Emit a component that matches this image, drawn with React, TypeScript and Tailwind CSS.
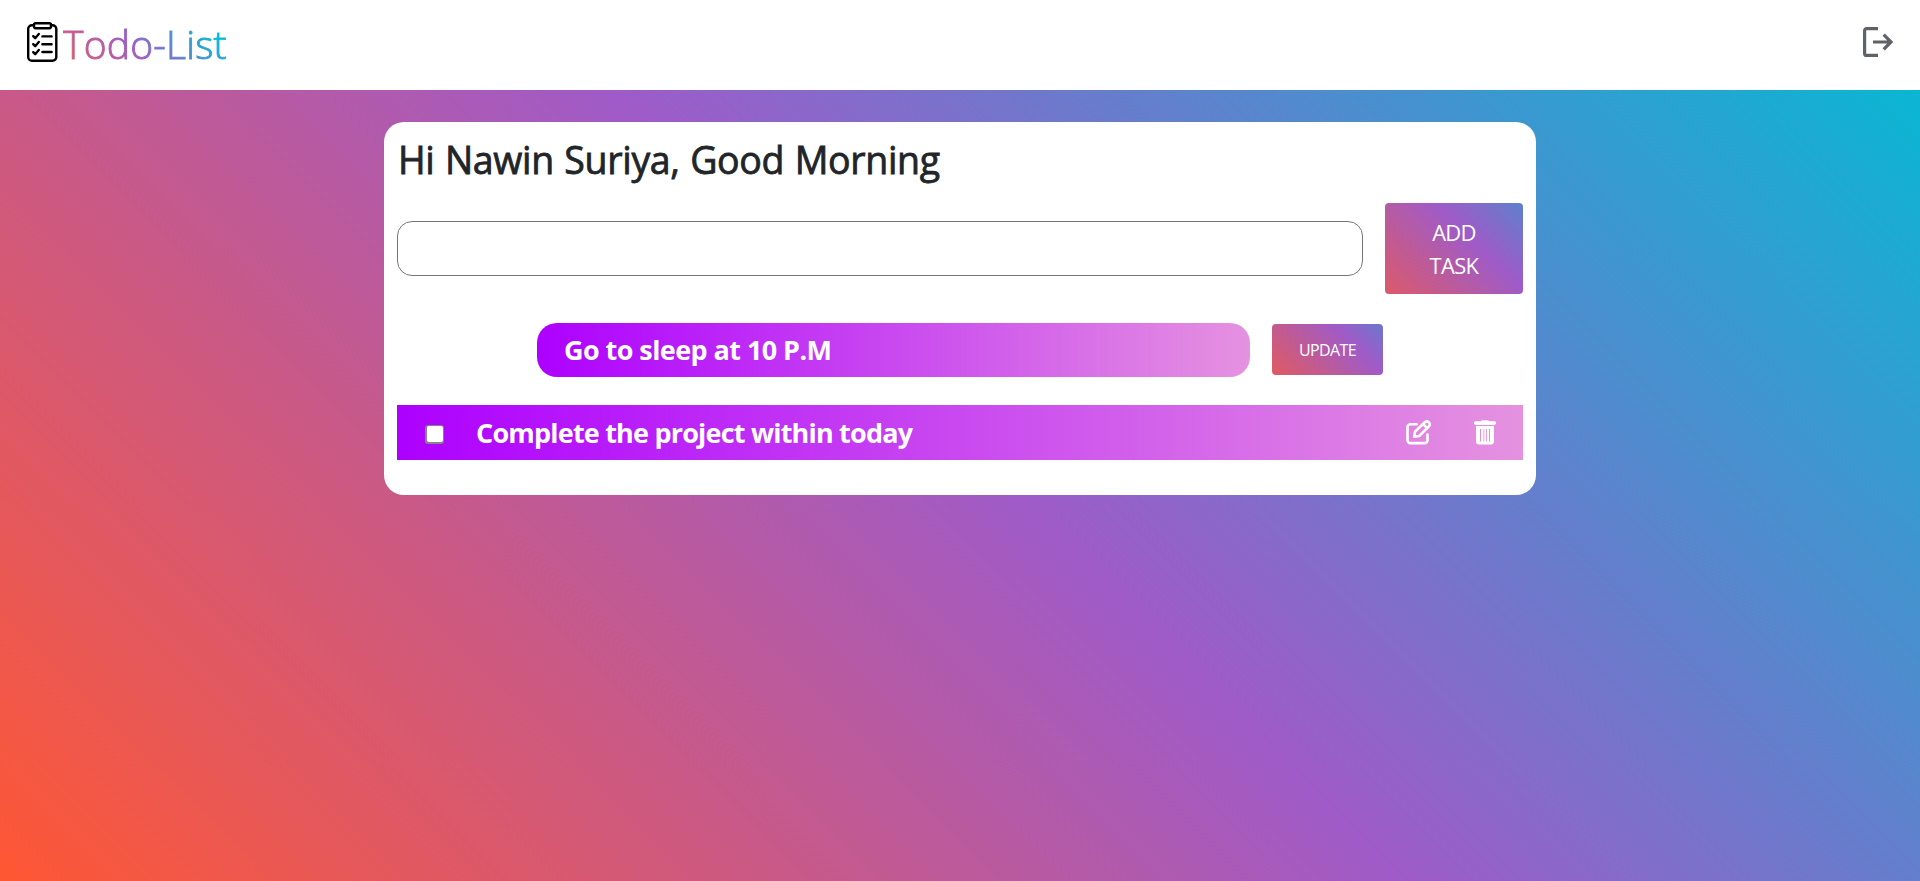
function ClipboardIcon() {
  return (
    <svg className="h-10 w-[31px] shrink-0" viewBox="0 0 31 40" fill="none" stroke="#000" strokeWidth="2.4" strokeLinecap="round" strokeLinejoin="round">
      <path d="M7 3.2H5A3.8 3.8 0 0 0 1.200 7v28A3.8 3.8 0 0 0 5 38.8h20.500a3.8 3.8 0 0 0 3.800-3.800V7A3.800 3.800 0 0 0 25.500 3.200H24" />
      <rect x="7" y="1.2" width="17" height="5" rx="1.6" />
      <path d="M6.2 14.2l2 2 3.600-4.200M6.200 22.200l2 2 3.600-4.200M6.200 30.200l2 2 3.600-4.200" />
      <path d="M15.400 14.400h9.200M15.400 22.200h9.200M15.400 30h9.200" />
    </svg>
  );
}

function LogoutIcon() {
  return (
    <svg className="h-[30px] w-[30px]" viewBox="0 0 30 30" fill="none" stroke="#5f6368" strokeWidth="3.2">
      <path d="M15 1.600H3.600a2 2 0 0 0-2 2v22.800a2 2 0 0 0 2 2H15" />
      <path d="M10 15h17.500M20.700 7.700L28 15l-7.300 7.300" />
    </svg>
  );
}

function EditIcon() {
  return (
    <svg className="h-[25px] w-[25px]" viewBox="0 0 25 25" fill="none" stroke="#fff" strokeWidth="2.6" strokeLinecap="round" strokeLinejoin="round">
      <path d="M10.600 4.300H4.400a2.900 2.900 0 0 0-2.900 2.900v13a2.900 2.900 0 0 0 2.900 2.900h14.200a2.900 2.900 0 0 0 2.900-2.900v-5.700" />
      <path d="M8.200 16.800l.8-5L18.800 2.300a2.900 2.900 0 0 1 4.100 4.100L13.200 16z" />
      <path d="M17.200 4.200l3.800 3.800" />
    </svg>
  );
}

function TrashIcon() {
  return (
    <svg className="h-[25px] w-[22px]" viewBox="0 0 22 25" fill="#fff">
      <path d="M7 1.200Q7.200.2 8.500.2h5q1.300 0 1.500 1h5.200a1.600 1.600 0 0 1 0 3.800H1.800a1.600 1.600 0 0 1 0-3.800z" />
      <path fillRule="evenodd" d="M2 6h18v15.500a3 3 0 0 1-3 3H5a3 3 0 0 1-3-3zM6 9v12.500h1V9zM9.500 9v12.500h.8V9zM12 9v12.500h.8V9zM15 9v12.500h1V9z" />
    </svg>
  );
}

export default function App() {
  return (
    <div className="flex h-[881px] w-full flex-col bg-[linear-gradient(45deg,#ff5733,#9f5bc8,#00bcd4)] font-['Open_Sans','Noto_Sans',sans-serif]">
      <header className="flex h-[90px] shrink-0 items-center justify-between bg-white pr-[27px] pl-[27px]">
        <div className="flex items-center gap-[5px]">
          <div className="-mt-[6px]"><ClipboardIcon /></div>
          <h1 className="-mt-[2px] bg-[linear-gradient(45deg,#ea5a50,#9f5bc8_43%,#00bcd4_86%)] bg-clip-text text-[39px] leading-[60px] font-light tracking-[0.2px] whitespace-nowrap text-transparent [-webkit-text-stroke:0.9px_transparent]">Todo-List</h1>
        </div>
        <button type="button" aria-label="Log out" className="-mt-[6px]"><LogoutIcon /></button>
      </header>

      <main className="mx-auto mt-8 h-[373px] w-[1152px] rounded-[20px] bg-white px-[13px] pt-[14px]">
        <h2 className="h-[48px] pl-px text-[37.5px] leading-[48px] font-medium tracking-[-0.32px] [word-spacing:1px] whitespace-nowrap text-[#212529] [-webkit-text-stroke:0.8px_#212529]">Hi Nawin Suriya, Good Morning</h2>
        <div className="mt-[19px] flex h-[91px] items-center justify-between">
          <input aria-label="New task" className="h-[55px] w-[966px] rounded-[15px] border border-[#767676] bg-white px-6 text-[24px] outline-none" />
          <button type="button" className="h-[91px] w-[138px] rounded-[4px] bg-[linear-gradient(45deg,#db5a6a,#9f5bc8_62%,#5e80cc)] px-7 text-[22px] leading-[33px] tracking-[-0.7px] text-white">ADD TASK</button>
        </div>
        <div className="mt-[29px] flex h-[54px] items-start pl-[140px]">
          <div className="flex h-[54px] w-[713px] items-center rounded-[20px] bg-[linear-gradient(90deg,#ad00ff,#e592e0)] pl-[27px] text-[27px] font-bold tracking-[-0.57px] whitespace-nowrap text-white">Go to sleep at 10 P.M</div>
          <button type="button" className="mt-px ml-[22px] h-[51px] w-[111px] rounded-[4px] bg-[linear-gradient(45deg,#e05a60,#9f5bc8_70%,#6a78cc)] pt-px text-[16px] tracking-[-0.65px] text-white">UPDATE</button>
        </div>
        <div className="mt-[28px] flex h-[55px] items-center bg-[linear-gradient(90deg,#ad00ff,#e592e0)] pr-[27px] pl-[28px] text-white">
          <span className="mt-[3px] flex h-[19px] w-[19px] rounded-[3px] bg-[#8a7f8f] p-[1.5px]">
            <input type="checkbox" aria-label="Done" className="h-full w-full appearance-none rounded-[2px] bg-white" />
          </span>
          <span className="ml-[32px] grow pt-[2px] text-[27px] font-bold tracking-[-0.8px] whitespace-nowrap">Complete the project within today</span>
          <button type="button" aria-label="Edit"><EditIcon /></button>
          <button type="button" aria-label="Delete" className="ml-[43px]"><TrashIcon /></button>
        </div>
      </main>
    </div>
  );
}
